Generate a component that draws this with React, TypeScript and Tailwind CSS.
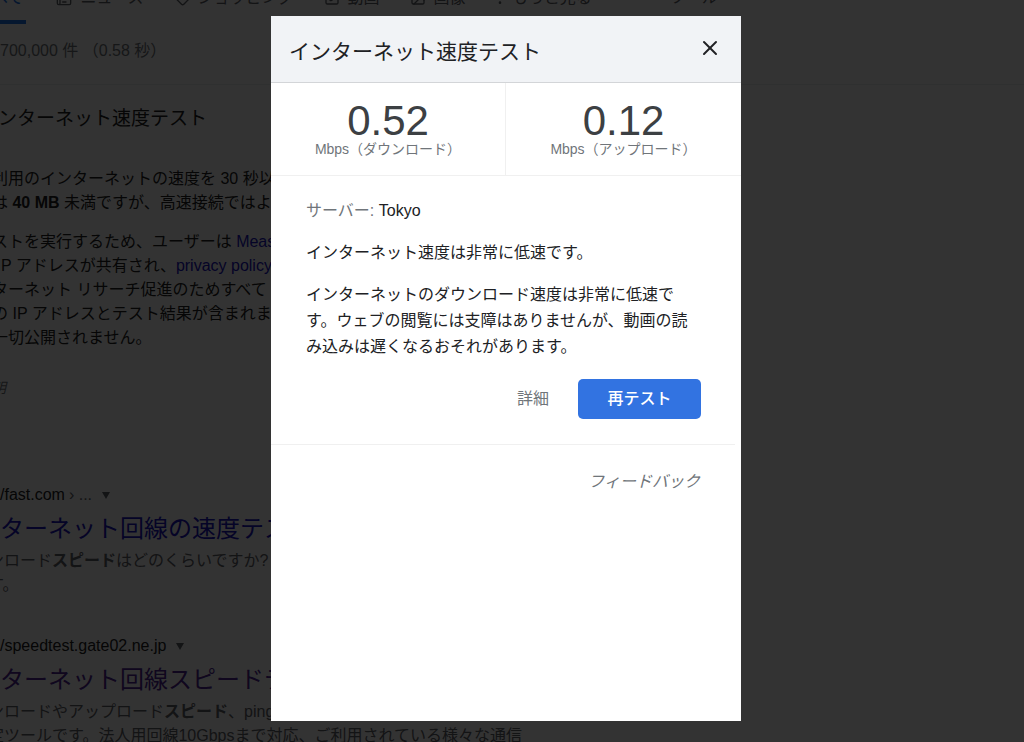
import React, { useState } from 'react';
import { Image, MoreVertical, Newspaper, SquarePlay, Tag, X } from 'lucide-react';

const tabs = [
  { label: 'ニュース', icon: Newspaper },
  { label: 'ショッピング', icon: Tag },
  { label: '動画', icon: SquarePlay },
  { label: '画像', icon: Image },
];

const speeds = [
  { value: '0.52', label: 'Mbps（ダウンロード）' },
  { value: '0.12', label: 'Mbps（アップロード）' },
];

function SearchTabs() {
  return (
    <nav className="-mt-3.5 flex gap-[30px] whitespace-nowrap leading-6 text-[#5f6368]">
      <a href="#all" className="-ml-2 border-b-4 border-[#1a73e8] pb-2.5 pr-[3px] text-[#1a73e8]">
        べて
      </a>
      {tabs.map(({ label, icon: Icon }) => (
        <a key={label} href={`#${label}`} className="flex h-6 items-center gap-2">
          <Icon className="h-4 w-4" />
          {label}
        </a>
      ))}
      <button type="button" className="-ml-1 flex h-6 items-center gap-1">
        <MoreVertical className="h-4 w-4" />
        もっと見る
      </button>
      <button type="button" className="ml-12 h-6">
        ツール
      </button>
    </nav>
  );
}

function SpeedTestCard() {
  return (
    <section className="mt-[21px] border-t border-[#eceef0] pt-5 text-[#222]">
      <h2 className="-ml-0.5 text-[19px] leading-7">ンターネット速度テスト</h2>
      <div className="-ml-2 mt-[34px] whitespace-nowrap leading-6">
        <p>
          利用のインターネットの速度を 30 秒以
          <br />は <b>40 MB</b> 未満ですが、高速接続ではよ
        </p>
        <p className="mt-[15px]">
          ストを実行するため、ユーザーは{' '}
          <a href="#mlab" className="text-[#1a14c0]">Meas</a>
          <br />
          &nbsp;IP アドレスが共有され、
          <a href="#privacy" className="text-[#1a14c0]">privacy policy</a>
          <br />
          ターネット リサーチ促進のためすべて
          <br />の IP アドレスとテスト結果が含まれま
          <br />
          一切公開されません。
        </p>
        <p className="mt-[26px] text-sm italic leading-6 text-[#70757a]">明</p>
      </div>
    </section>
  );
}

type ResultProps = {
  url: string;
  path?: string;
  title: string;
  visited?: boolean;
  children: React.ReactNode;
};

function Result({ url, path, title, visited, children }: ResultProps) {
  return (
    <article className="whitespace-nowrap">
      <div className="flex items-center leading-6 text-[#222]">
        <span>{url}</span>
        {path && <span className="ml-1 text-[#5f6368]">{path}</span>}
        <span className="ml-2.5 h-0 w-0 border-x-4 border-t-[7px] border-x-transparent border-t-[#5f6368]" />
      </div>
      <h3 className="mt-1 text-2xl leading-9">
        <a href="#result" className={visited ? 'text-[#4f2596]' : 'text-[#1a14c0]'}>
          {title}
        </a>
      </h3>
      <p className="-ml-3 mt-0.5 leading-6 text-[#5f6368]">{children}</p>
    </article>
  );
}

function SpeedDialog({ onClose }: { onClose: () => void }) {
  return (
    <div className="fixed inset-0 flex justify-center bg-black/80 pb-[21px] pr-3 pt-4">
      <div
        role="dialog"
        aria-modal="true"
        aria-labelledby="speed-title"
        className="w-full max-w-[470px] overflow-y-auto bg-white text-[#202124]"
      >
        <header className="flex items-center justify-between border-b border-[#d3d5d8] bg-[#f1f3f6] px-[18px] py-4">
          <h1 id="speed-title" className="mt-1.5 text-[21px] leading-7">
            インターネット速度テスト
          </h1>
          <button type="button" aria-label="閉じる" onClick={onClose} className="-mt-0.5 p-px">
            <X className="h-6 w-6" />
          </button>
        </header>

        <div className="grid grid-cols-2 divide-x divide-[#f0f0f0] border-b border-[#f0f0f0]">
          {speeds.map((speed) => (
            <div key={speed.label} className="py-[18px] text-center">
              <div className="text-[42px] leading-10 text-[#3c4043]">{speed.value}</div>
              <div className="text-sm leading-4 text-[#70757a]">{speed.label}</div>
            </div>
          ))}
        </div>

        <div className="space-y-4 pl-[35px] pr-10 pt-[22px] leading-[26px]">
          <p>
            <span className="text-[#70757a]">サーバー:</span> Tokyo
          </p>
          <p>インターネット速度は非常に低速です。</p>
          <p>
            インターネットのダウンロード速度は非常に低速です。ウェブの閲覧には支障はありませんが、動画の読み込みは遅くなるおそれがあります。
          </p>
        </div>

        <div className="mt-[19px] flex items-center justify-end gap-[29px] px-10 pb-[25px]">
          <button type="button" className="text-[#70757a]">
            詳細
          </button>
          <button type="button" className="h-10 w-[123px] rounded-[5px] bg-[#3273e1] font-medium text-white">
            再テスト
          </button>
        </div>

        <footer className="mr-1.5 border-t border-[#f0f0f0] pr-[35px] pt-[25px] text-right">
          <a href="#feedback" className="italic text-[#70757a]">
            フィードバック
          </a>
        </footer>
      </div>
    </div>
  );
}

export default function App() {
  const [isOpen, setIsOpen] = useState(true);

  return (
    <div className="h-screen overflow-hidden bg-white font-['Liberation_Sans','Noto_Sans_CJK_JP',sans-serif] text-base">
      <SearchTabs />
      <p className="mt-[15px] whitespace-nowrap leading-6 text-[#70757a]">700,000 件 （0.58 秒）</p>
      <SpeedTestCard />
      <main className="mt-[83px] space-y-[37px]">
        <Result url="/fast.com" path="› ..." title="ターネット回線の速度テス">
          ンロード<b>スピード</b>はどのくらいですか?
          <br />
          す。
        </Result>
        <Result url="/speedtest.gate02.ne.jp" title="ターネット回線スピードテ" visited>
          ンロードやアップロード<b>スピード</b>、ping
          <br />
          定ツールです。法人用回線10Gbpsまで対応、ご利用されている様々な通信
        </Result>
      </main>
      {isOpen && <SpeedDialog onClose={() => setIsOpen(false)} />}
    </div>
  );
}
